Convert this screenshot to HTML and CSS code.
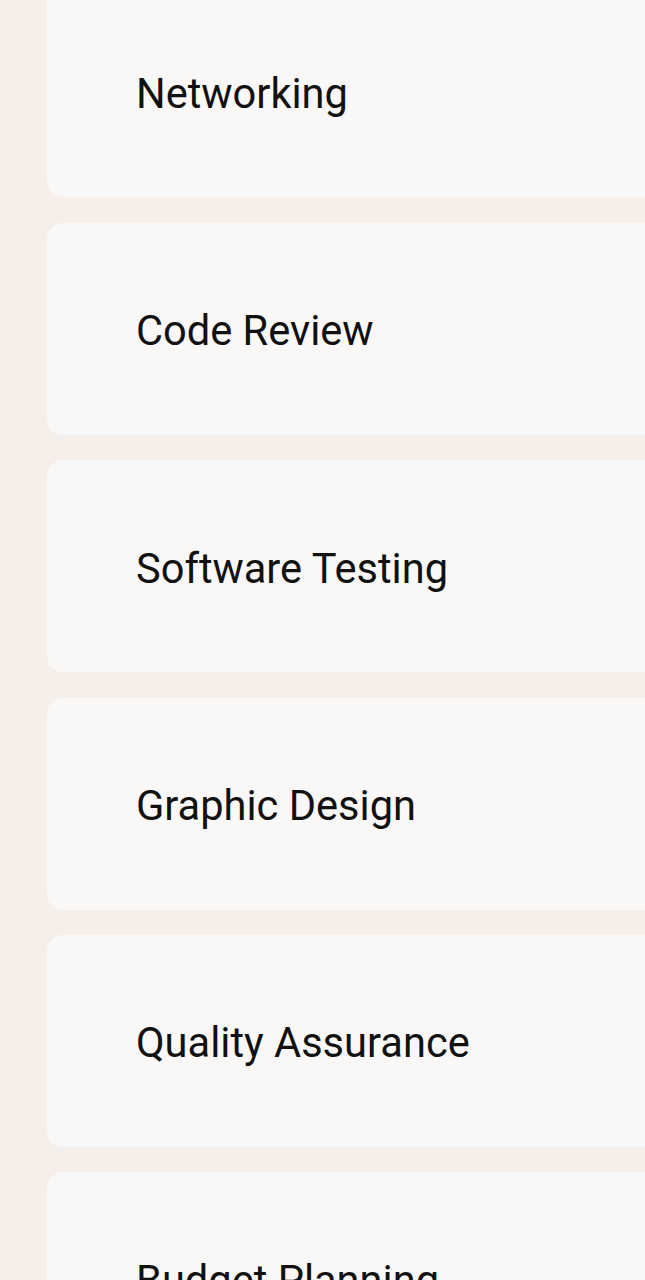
FILE: index.html
```html
<!DOCTYPE html>
<html>
<head>
<meta charset="utf-8">
<link rel="stylesheet" href="styles.css">
</head>
<body>
<div class="list">
  <div class="card"><span class="label">Networking</span></div>
  <div class="card"><span class="label">Code Review</span></div>
  <div class="card"><span class="label">Software Testing</span></div>
  <div class="card"><span class="label">Graphic Design</span></div>
  <div class="card"><span class="label">Quality Assurance</span></div>
  <div class="card"><span class="label">Budget Planning</span></div>
</div>
</body>
</html>
```

FILE: styles.css
```css
html, body {
  margin: 0;
  padding: 0;
  background: #f6efe9;
  height: 1280px;
  overflow: hidden;
}
.list {
  display: flex;
  flex-direction: column;
  gap: 25.4px;
  margin-top: -14.6px;
  padding-left: 47px;
  width: 700px;
}
.card {
  background: #f9f8f6;
  border-radius: 16px;
  height: 212px;
  flex: 0 0 212px;
  display: flex;
  align-items: center;
  padding-left: 89px;
  padding-top: 4px;
  box-sizing: border-box;
}
.label {
  font-family: Roboto, "Noto Sans", sans-serif;
  font-size: 41.6px;
  color: #111111;
}
```
